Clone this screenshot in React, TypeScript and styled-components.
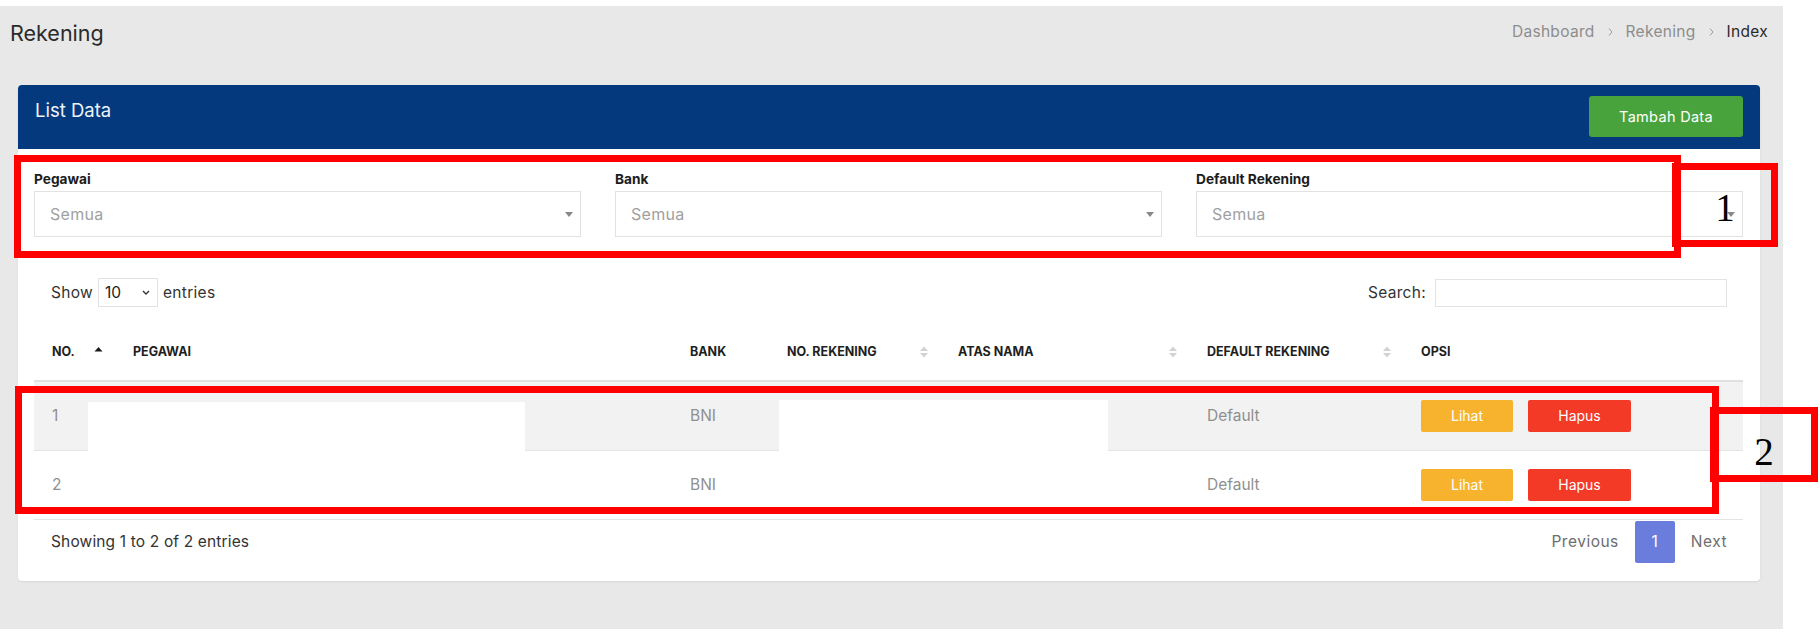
import React from "react";
import styled, { createGlobalStyle } from "styled-components";

const Global = createGlobalStyle`
  html, body { margin: 0; padding: 0; background: #ffffff; }
  body { font-family: Inter, "Open Sans", "Liberation Sans", sans-serif; color: #333; }
  * { box-sizing: border-box; }
`;

const Root = styled.div`
  position: relative;
  width: 1820px;
  height: 632px;
  overflow: hidden;
  padding-top: 6px;
`;

const Shell = styled.div`
  width: 1783px;
  height: 623px;
  background: #e8e8e8;
  display: flex;
  flex-direction: column;
`;

const TopBar = styled.div`
  display: flex;
  justify-content: space-between;
  align-items: center;
  height: 42px;
  padding: 12px 15px 0 10px;
`;

const PageTitle = styled.h1`
  margin: 0;
  font-size: 21.5px;
  line-height: 30px;
  font-weight: 400;
  color: #2b2b2b;
`;

const Crumbs = styled.nav`
  display: flex;
  align-items: center;
  gap: 13px;
  font-size: 15.5px;
  letter-spacing: 0.3px;
  padding-bottom: 3px;
`;

const Crumb = styled.span<{ $active?: boolean }>`
  color: ${(p) => (p.$active ? "#2a2a2a" : "#8d8d8d")};
`;

const Card = styled.section`
  margin: 37px 23px 0 18px;
  background: #ffffff;
  border-radius: 4px;
  box-shadow: 0 1px 2px rgba(0, 0, 0, 0.08);
`;

const CardHeader = styled.header`
  height: 64px;
  background: #04397d;
  border-radius: 4px 4px 0 0;
  display: flex;
  justify-content: space-between;
  align-items: flex-start;
  padding: 0 17px;
`;

const CardTitle = styled.h2`
  margin: 14px 0 0;
  font-size: 18.5px;
  line-height: 22px;
  font-weight: 400;
  color: #eef3fa;
`;

const AddButton = styled.button`
  margin-top: 11px;
  width: 154px;
  height: 41px;
  border: none;
  border-radius: 3px;
  background: #48a33d;
  color: #ffffff;
  font-family: inherit;
  font-size: 14.5px;
  letter-spacing: 0.3px;
`;

const CardBody = styled.div`
  padding: 20px 17px 18px 16px;
`;

const FilterGrid = styled.div`
  display: grid;
  grid-template-columns: repeat(3, 1fr);
  column-gap: 34px;
`;

const FieldLabel = styled.label`
  display: block;
  font-size: 13.7px;
  line-height: 20px;
  font-weight: 700;
  color: #1c1c1c;
  margin-bottom: 2px;
`;

const SelectBox = styled.div`
  height: 46px;
  border: 1px solid #e2e2e2;
  display: flex;
  align-items: center;
  justify-content: space-between;
  padding: 0 7px 0 15px;
  color: #a0a0a0;
  font-size: 16px;
  letter-spacing: 0.3px;
`;

const Tools = styled.div`
  margin-top: 41px;
  height: 29px;
  display: flex;
  justify-content: space-between;
  align-items: center;
  padding: 0 16px 0 17px;
  font-size: 15.5px;
  letter-spacing: 0.3px;
  color: #333;
`;

const ToolGroup = styled.div`
  display: flex;
  align-items: center;
`;

const LengthSelect = styled.div`
  width: 60px;
  height: 29px;
  margin: 0 5px;
  border: 1px solid #e2e2e2;
  display: flex;
  align-items: center;
  justify-content: space-between;
  padding: 0 7px 0 6px;
  color: #222;
  letter-spacing: 0;
`;

const SearchInput = styled.input`
  width: 292px;
  height: 28px;
  margin-left: 9px;
  border: 1px solid #e3e3e3;
  outline: none;
`;

const Table = styled.table`
  margin-top: 16px;
  width: 100%;
  border-collapse: collapse;
  table-layout: fixed;
`;

const Th = styled.th`
  height: 58px;
  padding: 0 12px 0 18px;
  text-align: left;
  vertical-align: middle;
  font-size: 12.5px;
  font-weight: 700;
  color: #1f1f1f;
  border-bottom: 2px solid #e0e0e0;
  white-space: nowrap;
`;

const ThInner = styled.div`
  display: flex;
  align-items: center;
  justify-content: space-between;
`;

const Tr = styled.tr<{ $striped?: boolean }>`
  background: ${(p) => (p.$striped ? "#f2f2f2" : "#ffffff")};
`;

const Td = styled.td`
  height: 69px;
  padding: 0 18px;
  vertical-align: middle;
  font-size: 15.5px;
  color: #8f8f8f;
  border-bottom: 1px solid #e4e4e4;
`;

const ActionButton = styled.button<{ $tone: "warn" | "danger"; $w: number }>`
  width: ${(p) => p.$w}px;
  height: 32px;
  border: none;
  border-radius: 2px;
  margin-right: 15px;
  background: ${(p) => (p.$tone === "warn" ? "#f7b32d" : "#f33a26")};
  color: #ffffff;
  font-family: inherit;
  font-size: 14px;
`;

const InfoRow = styled.div`
  margin-top: 1px;
  height: 42px;
  display: flex;
  justify-content: space-between;
  align-items: center;
  padding-left: 17px;
  font-size: 15.5px;
  letter-spacing: 0.15px;
  color: #333;
`;

const Pager = styled.div`
  display: flex;
  align-items: center;
  height: 42px;
`;

const PageLink = styled.span<{ $current?: boolean }>`
  height: 42px;
  display: flex;
  align-items: center;
  justify-content: center;
  padding: ${(p) => (p.$current ? "0" : "0 16px")};
  width: ${(p) => (p.$current ? "40px" : "auto")};
  border-radius: 2px;
  background: ${(p) => (p.$current ? "#6a7ddd" : "transparent")};
  color: ${(p) => (p.$current ? "#ffffff" : "#6d6d6d")};
  font-size: 15.5px;
  letter-spacing: 0.5px;
`;

/* Annotation overlays lying over the screenshot */
const RedFrame = styled.div<{ $x: number; $y: number; $w: number; $h: number }>`
  position: absolute;
  left: ${(p) => p.$x}px;
  top: ${(p) => p.$y}px;
  width: ${(p) => p.$w}px;
  height: ${(p) => p.$h}px;
  border: 7px solid #ff0000;
  display: flex;
  align-items: center;
  justify-content: center;
`;

const Marker = styled.span<{ $dy: number }>`
  font-family: "Liberation Serif", "Times New Roman", serif;
  font-size: 39px;
  line-height: 1;
  color: #000;
  transform: translateY(${(p) => p.$dy}px);
`;

const Redaction = styled.div<{ $x: number; $y: number; $w: number; $h: number }>`
  position: absolute;
  left: ${(p) => p.$x}px;
  top: ${(p) => p.$y}px;
  width: ${(p) => p.$w}px;
  height: ${(p) => p.$h}px;
  background: #ffffff;
`;

const Caret = () => (
  <svg width="8" height="5" viewBox="0 0 8 5">
    <path d="M0 0 L8 0 L4 5 Z" fill="#888" />
  </svg>
);

const Chevron = () => (
  <svg width="8" height="5" viewBox="0 0 8 5">
    <path d="M1 1 L4 4 L7 1" fill="none" stroke="#333" strokeWidth="1.4" />
  </svg>
);

const CrumbSep = () => (
  <svg width="5" height="8" viewBox="0 0 5 8">
    <path d="M1 0.5 L4 4 L1 7.5" fill="none" stroke="#999" strokeWidth="1" />
  </svg>
);

const SortBoth = () => (
  <svg width="8" height="12" viewBox="0 0 8 12">
    <path d="M0 5 L4 0.5 L8 5 Z" fill="#d2d2d2" />
    <path d="M0 7 L8 7 L4 11.5 Z" fill="#d2d2d2" />
  </svg>
);

const SortAsc = () => (
  <svg width="9" height="12" viewBox="0 0 9 12">
    <path d="M0.5 5.5 L4.5 1 L8.5 5.5 Z" fill="#1a1a1a" />
  </svg>
);

type Col = { label: string; width: number; sort?: "asc" | "both" };
const columns: Col[] = [
  { label: "NO.", width: 81, sort: "asc" },
  { label: "PEGAWAI", width: 557 },
  { label: "BANK", width: 97 },
  { label: "NO. REKENING", width: 171, sort: "both" },
  { label: "ATAS NAMA", width: 249, sort: "both" },
  { label: "DEFAULT REKENING", width: 214, sort: "both" },
  { label: "OPSI", width: 340 },
];

const rows = [
  { no: "1", bank: "BNI", def: "Default" },
  { no: "2", bank: "BNI", def: "Default" },
];

const filters = ["Pegawai", "Bank", "Default Rekening"];

export default function App() {
  return (
    <Root>
      <Global />
      <Shell>
        <TopBar>
          <PageTitle>Rekening</PageTitle>
          <Crumbs>
            <Crumb>Dashboard</Crumb>
            <CrumbSep />
            <Crumb>Rekening</Crumb>
            <CrumbSep />
            <Crumb $active>Index</Crumb>
          </Crumbs>
        </TopBar>
        <Card>
          <CardHeader>
            <CardTitle>List Data</CardTitle>
            <AddButton>Tambah Data</AddButton>
          </CardHeader>
          <CardBody>
            <FilterGrid>
              {filters.map((f) => (
                <div key={f}>
                  <FieldLabel>{f}</FieldLabel>
                  <SelectBox>
                    <span>Semua</span>
                    <Caret />
                  </SelectBox>
                </div>
              ))}
            </FilterGrid>
            <Tools>
              <ToolGroup>
                Show
                <LengthSelect>
                  <span>10</span>
                  <Chevron />
                </LengthSelect>
                entries
              </ToolGroup>
              <ToolGroup>
                Search:
                <SearchInput />
              </ToolGroup>
            </Tools>
            <Table>
              <colgroup>
                {columns.map((c) => (
                  <col key={c.label} style={{ width: c.width }} />
                ))}
              </colgroup>
              <thead>
                <tr>
                  {columns.map((c) => (
                    <Th key={c.label}>
                      <ThInner>
                        <span>{c.label}</span>
                        {c.sort === "asc" && <SortAsc />}
                        {c.sort === "both" && <SortBoth />}
                      </ThInner>
                    </Th>
                  ))}
                </tr>
              </thead>
              <tbody>
                {rows.map((r, i) => (
                  <Tr key={r.no} $striped={i === 0}>
                    <Td>{r.no}</Td>
                    <Td />
                    <Td>{r.bank}</Td>
                    <Td />
                    <Td />
                    <Td>{r.def}</Td>
                    <Td>
                      <ActionButton $tone="warn" $w={92}>Lihat</ActionButton>
                      <ActionButton $tone="danger" $w={103}>Hapus</ActionButton>
                    </Td>
                  </Tr>
                ))}
              </tbody>
            </Table>
            <InfoRow>
              <span>Showing 1 to 2 of 2 entries</span>
              <Pager>
                <PageLink>Previous</PageLink>
                <PageLink $current>1</PageLink>
                <PageLink>Next</PageLink>
              </Pager>
            </InfoRow>
          </CardBody>
        </Card>
      </Shell>

      <Redaction $x={88} $y={402} $w={437} $h={49} />
      <Redaction $x={779} $y={400} $w={329} $h={51} />

      <RedFrame $x={14} $y={155} $w={1667} $h={103} />
      <RedFrame $x={1672} $y={163} $w={106} $h={84}>
        <Marker $dy={2}>1</Marker>
      </RedFrame>
      <RedFrame $x={15} $y={386} $w={1704} $h={128} />
      <RedFrame $x={1710} $y={407} $w={108} $h={75}>
        <Marker $dy={7}>2</Marker>
      </RedFrame>
    </Root>
  );
}
